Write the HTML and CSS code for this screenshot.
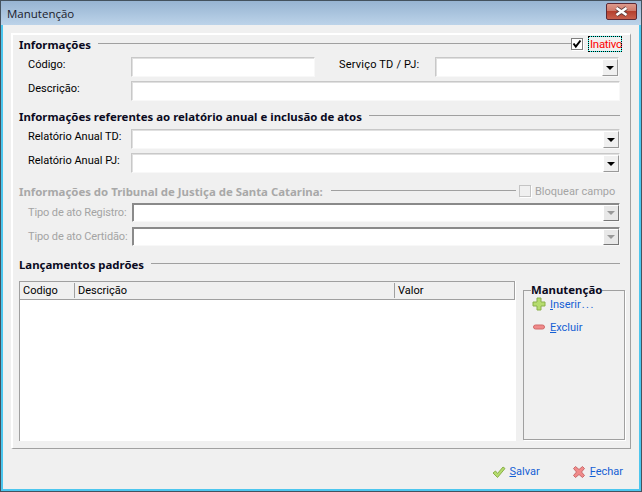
FILE: index.html
```html
<!DOCTYPE html>
<html lang="pt">
<head>
<meta charset="utf-8">
<title>Manutenção</title>
<link rel="stylesheet" href="styles.css">
</head>
<body>
<div class="window">
  <header class="titlebar">
    <span class="title">Manutenção</span>
    <button class="close" aria-label="Fechar">
      <svg width="15" height="11" viewBox="0 0 15 11"><path d="M2.500 2 L12.500 9 M12.500 2 L2.500 9" stroke="#5a3a3a" stroke-width="4" fill="none"/><path d="M2.500 2 L12.500 9 M12.500 2 L2.500 9" stroke="#fff" stroke-width="2.600" fill="none"/></svg>
    </button>
  </header>
  <div class="client">
    <main class="panel">
      <div class="heading">
        <h2>Informações</h2><span class="rule"></span>
        <span class="check checked"><svg width="10" height="10" viewBox="0 0 10 10"><path d="M1.5 4.500 L3.800 7.500 L8.500 1.500" stroke="#000" stroke-width="2" fill="none"/></svg></span>
        <span class="inativo">Inativo</span>
      </div>
      <div class="row first">
        <label class="lbl">Código:</label>
        <div class="field short"></div>
        <label class="lbl second">Serviço TD / PJ:</label>
        <div class="field combo short"><span class="drop"><i></i></span></div>
      </div>
      <div class="row">
        <label class="lbl">Descrição:</label>
        <div class="field grow"></div>
      </div>
      <div class="heading sec2">
        <h2>Informações referentes ao relatório anual e inclusão de atos</h2><span class="rule"></span>
      </div>
      <div class="row first">
        <label class="lbl">Relatório Anual TD:</label>
        <div class="field combo grow"><span class="drop"><i></i></span></div>
      </div>
      <div class="row">
        <label class="lbl">Relatório Anual PJ:</label>
        <div class="field combo grow"><span class="drop"><i></i></span></div>
      </div>
      <div class="heading sec3 disabled">
        <h2>Informações do Tribunal de Justiça de Santa Catarina:</h2><span class="rule"></span>
        <span class="check"></span>
        <span class="bloquear">Bloquear campo</span>
      </div>
      <div class="row tight disabled">
        <label class="lbl">Tipo de ato Registro:</label>
        <div class="field combo grow"><span class="drop"><i></i></span></div>
      </div>
      <div class="row disabled">
        <label class="lbl">Tipo de ato Certidão:</label>
        <div class="field combo grow"><span class="drop"><i></i></span></div>
      </div>
      <div class="heading sec4">
        <h2>Lançamentos padrões</h2><span class="rule"></span>
      </div>
      <div class="lower">
        <div class="table">
          <div class="thead">
            <span class="col c1">Codigo</span>
            <span class="col c2">Descrição</span>
            <span class="col c3">Valor</span>
          </div>
        </div>
        <fieldset class="group">
          <legend>Manutenção</legend>
          <a class="action ins">
            <svg width="14" height="14" viewBox="0 0 14 14"><path d="M5 1h4v4h4v4H9v4H5V9H1V5h4z" fill="#b5dc6e" stroke="#8ab04a"/></svg>
            <span><u>I</u>nserir<span class="dots">...</span></span>
          </a>
          <a class="action exc">
            <svg width="14" height="14" viewBox="0 0 14 14"><rect x="1.500" y="5" width="11" height="4" rx="2" fill="#f08a8a" stroke="#d06a6a"/></svg>
            <span><u>E</u>xcluir</span>
          </a>
        </fieldset>
      </div>
    </main>
    <footer class="footer">
      <a class="action save">
        <svg width="14" height="14" viewBox="0 0 14 14"><path d="M1 8 L3.500 6 L5.500 8.500 L11 2 L13 3.500 L5.500 12.500z" fill="#b5dc6e" stroke="#8ab04a"/></svg>
        <span><u>S</u>alvar</span>
      </a>
      <a class="action quit">
        <svg width="14" height="14" viewBox="0 0 14 14"><path d="M3.500 1.500 L7 4.500 L10.500 1.500 L12.500 3.500 L9.500 7 L12.500 10.500 L10.500 12.500 L7 9.500 L3.500 12.500 L1.500 10.500 L4.500 7 L1.500 3.500z" fill="#f08a8a" stroke="#c96a6a"/></svg>
        <span><u>F</u>echar</span>
      </a>
    </footer>
  </div>
</div>
</body>
</html>
```
FILE: styles.css
```css
* { box-sizing: border-box; }
html, body { margin: 0; padding: 0; }
body { width: 642px; height: 492px; overflow: hidden; background: #f0f0f0; font-family: Roboto, Arial, sans-serif; font-size: 11px; color: #000; }
.window { width: 642px; height: 492px; display: flex; flex-direction: column; border: 1px solid #44525e; background: #a9c4df; }
.titlebar { height: 24px; flex: none; display: flex; align-items: center; padding-left: 6px; padding-right: 4px; justify-content: space-between; background: linear-gradient(#97b4d2, #bcd3e9); }
.title { font-family: "Open Sans", sans-serif; font-size: 11.5px; color: #1b1b2b; }
.close { width: 31px; height: 17px; margin: -4px 0 0 0; padding: 0; border: 1px solid #5d2a35; border-radius: 2px; background: linear-gradient(#dd9a8c 0, #cf7a6a 45%, #b5402e 50%, #c8604d 100%); display: flex; align-items: center; justify-content: center; }
.client { flex: 1; min-height: 0; display: flex; flex-direction: column; background: #f0f0f0; border: 2px solid #4cc6ee; border-top: 0; padding: 8px 8px 0 8px; }
.panel { height: 416px; flex: none; border-top: 2px solid #fff; border-left: 2px solid #fff; border-right: 1px solid #a0a0a0; border-bottom: 1px solid #a0a0a0; padding: 1px 10px 0 6px; }
.heading { height: 16px; display: flex; align-items: center; }
.heading h2 { margin: 0; font-family: "Noto Sans", sans-serif; font-weight: bold; font-size: 11.4px; color: #0a0a1e; white-space: nowrap; }
.rule { flex: 1; height: 1px; background: #a0a0a0; margin: 0 0 1px 7px; }
.check { width: 12px; height: 12px; flex: none; background: #fff; border: 1px solid #808080; box-shadow: 1px 1px 0 #fff; display: flex; align-items: center; justify-content: center; margin-right: 5px; }
.inativo { width: 34px; height: 16px; line-height: 14px; font-size: 11.5px; letter-spacing: -.3px; color: #f00; border: 1px solid #3fe; outline: 1px dotted #000; outline-offset: -1px; margin-right: -2px; white-space: nowrap; padding-left: 1px; }
.bloquear { color: #a4a4a4; width: 80px; white-space: nowrap; margin-right: 5px; margin-left: -1px; }
.row { display: flex; align-items: center; height: 20px; margin-top: 4px; }
.row.first { margin-top: 5px; }
.row.tight { margin-top: 3px; }
.lbl { width: 103px; margin-left: 9px; flex: none; white-space: nowrap; position: relative; top: -3px; }
.lbl.second { width: 96px; margin-left: 24px; letter-spacing: .2px; }
.field { height: 20px; background: #fff; border: 1px solid #f8f8f8; border-top: 1px solid #c8c8c8; border-left: 1px solid #c8c8c8; display: flex; justify-content: flex-end; box-shadow: inset 1px 1px 0 #e0e0e0; }
.field.short { width: 184px; flex: none; }
.field.grow { flex: 1; }
.drop { width: 16px; height: 17px; margin: 1px 0 0 0; background: #f0f0f0; border: 1px solid #fff; border-right: 1px solid #999; border-bottom: 1px solid #999; display: flex; align-items: center; justify-content: center; }
.drop i { width: 0; height: 0; border: 4px solid transparent; border-top: 4px solid #000; border-bottom: 0; }
.sec2 { margin-top: 7px; }
.sec3 { margin-top: 10px; }
.sec4 { margin-top: 10px; }
.disabled .lbl { color: #a4a4a4; top: 0; letter-spacing: -.12px; }
.disabled h2 { color: #a8a8a8; }
.disabled .rule { margin: 0 3px 1px 8px; }
.disabled .field { margin-left: 1px; border-top: 1px solid #8a8a8a; border-left: 1px solid #8a8a8a; box-shadow: inset 1px 1px 0 #8a8a8a; height: 19px; }
.disabled .drop { background: #e8e8e8; height: 16px; border-right-color: #777; border-bottom-color: #777; }
.disabled .drop i { border-top-color: #999; }
.disabled .check { background: #f0f0f0; border-color: #c4c4c4; }
.lower { display: flex; align-items: flex-start; margin-top: 9px; height: 160px; }
.table { width: 497px; height: 160px; background: #fff; border-left: 1px solid #a0a0a0; flex: none; }
.thead { display: flex; height: 19px; margin-right: 1px; background: #f0f0f0; border-top: 1px solid #a0a0a0; border-right: 1px solid #a0a0a0; border-bottom: 1px solid #a0a0a0; align-items: center; }
.col { height: 15px; line-height: 15px; padding-left: 3px; border-right: 1px solid #a0a0a0; white-space: nowrap; }
.c1 { width: 55px; }
.c2 { width: 320px; }
.c3 { border-right: 0; }
.group { width: 102px; height: 154px; margin: 5px 0 0 7px; padding: 0; border: 1px solid #a0a0a0; box-shadow: 1px 1px 0 #fff; flex: none; min-width: 0; }
.group legend { margin-left: 7px; padding: 0; font-family: "Noto Sans", sans-serif; font-weight: bold; font-size: 11.4px; color: #0a0a1e; line-height: 8px; }
.action { display: flex; align-items: center; color: #1560d4; gap: 4px; white-space: nowrap; }
.action u { text-underline-offset: 1px; }
.dots { letter-spacing: 1.5px; margin-left: 1px; }
.ins { margin: 3px 0 0 8px; }
.exc { margin: 9px 0 0 8px; }
.footer { flex: 1; display: flex; justify-content: flex-end; align-items: center; padding-right: 8px; gap: 32px; padding-top: 5px; }
```
